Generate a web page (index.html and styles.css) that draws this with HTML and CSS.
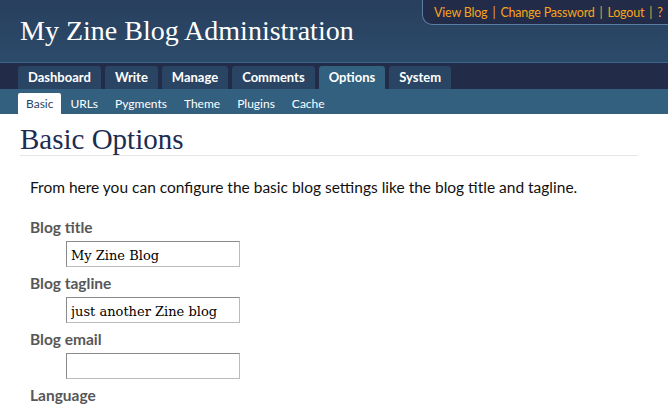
FILE: index.html
```html
<!DOCTYPE html>
<html>
<head>
<meta charset="utf-8">
<link rel="stylesheet" href="styles.css">
</head>
<body>
<div class="header">
  <h1 class="site-title">My Zine Blog Administration</h1>
  <div class="userbox">
    <a href="#">View Blog</a><span class="sep">|</span><a href="#">Change Password</a><span class="sep">|</span><a href="#">Logout</a><span class="sep">|</span><a href="#">?</a>
  </div>
</div>
<div class="mainnav">
  <a class="tab" href="#">Dashboard</a>
  <a class="tab" href="#">Write</a>
  <a class="tab" href="#">Manage</a>
  <a class="tab" href="#">Comments</a>
  <a class="tab active" href="#">Options</a>
  <a class="tab" href="#">System</a>
</div>
<div class="subnav">
  <a class="sub active" href="#">Basic</a>
  <a class="sub" href="#">URLs</a>
  <a class="sub" href="#">Pygments</a>
  <a class="sub" href="#">Theme</a>
  <a class="sub" href="#">Plugins</a>
  <a class="sub" href="#">Cache</a>
</div>
<div class="content">
  <h2 class="page-title">Basic Options</h2>
  <p class="intro">From here you can configure the basic blog settings like the blog title and tagline.</p>
  <div class="field">
    <label class="label">Blog title</label>
    <input class="input" type="text" value="My Zine Blog">
  </div>
  <div class="field">
    <label class="label">Blog tagline</label>
    <input class="input" type="text" value="just another Zine blog">
  </div>
  <div class="field">
    <label class="label">Blog email</label>
    <input class="input" type="text" value="">
  </div>
  <div class="field">
    <label class="label">Language</label>
  </div>
</div>
</body>
</html>
```
FILE: styles.css
```css
html, body {
  margin: 0;
  padding: 0;
  background: #fff;
  overflow: hidden;
}
body {
  font-family: "Lato", "DejaVu Sans", sans-serif;
}
a { text-decoration: none; }

.header {
  position: relative;
  height: 62px;
  background: linear-gradient(#283f5d, #2c4b6b);
  border-bottom: 1px solid #3e6688;
}
.site-title {
  margin: 0;
  padding: 15px 0 0 20px;
  font-family: "Liberation Serif", serif;
  font-weight: normal;
  font-size: 28px;
  line-height: 32px;
  color: #fff;
}
.userbox {
  position: absolute;
  top: 0;
  right: 0;
  left: 422px;
  height: 25px;
  box-sizing: border-box;
  padding: 5px 0 0 11px;
  background: #222b48;
  border: 1px solid #5b7fa2;
  border-top: none;
  border-right: none;
  border-bottom-left-radius: 10px;
  font-size: 12.5px;
  letter-spacing: -0.2px;
  white-space: nowrap;
}
.userbox a { color: #f9a31a; }
.userbox .sep { color: #e9a642; margin: 0 5px; }

.mainnav {
  display: flex;
  gap: 4px;
  height: 23px;
  padding: 3px 0 0 18px;
  background: #222b48;
}
.tab {
  display: block;
  padding: 0 10px;
  line-height: 23px;
  height: 23px;
  background: #2a4564;
  color: #fff;
  font-weight: bold;
  font-size: 13px;
  border-radius: 3px 3px 0 0;
}
.tab.active { background: #32607f; }

.subnav {
  display: flex;
  gap: 1px;
  height: 21px;
  padding: 4px 0 0 18px;
  background: #33607f;
}
.sub {
  display: block;
  padding: 0 8px;
  height: 21px;
  line-height: 21px;
  color: #fff;
  font-size: 12px;
  border-radius: 2px 2px 0 0;
}
.sub.active { background: #fff; color: #2a4564; }

.content {
  padding: 0 30px 0 20px;
}
.page-title {
  margin: 10px 0 0 0;
  font-family: "Liberation Serif", serif;
  font-weight: normal;
  font-size: 29px;
  line-height: 31px;
  color: #1d2c52;
  border-bottom: 1px solid #e6e6e6;
}
.intro {
  margin: 22px 0 21px 10px;
  font-size: 15.5px;
  line-height: 19px;
  color: #111;
}
.field {
  margin: 0 0 7px 10px;
}
.label {
  display: block;
  font-weight: bold;
  font-size: 15.5px;
  line-height: 19px;
  color: #575757;
}
.input {
  display: block;
  margin: 4px 0 0 36px;
  width: 174px;
  height: 26px;
  box-sizing: border-box;
  border: 1px solid #bbb;
  border-top-color: #8a8a8a;
  border-left-color: #8a8a8a;
  padding: 2px 4px 0 4px;
  font-family: "DejaVu Serif", serif;
  font-size: 13px;
  color: #000;
}
```
